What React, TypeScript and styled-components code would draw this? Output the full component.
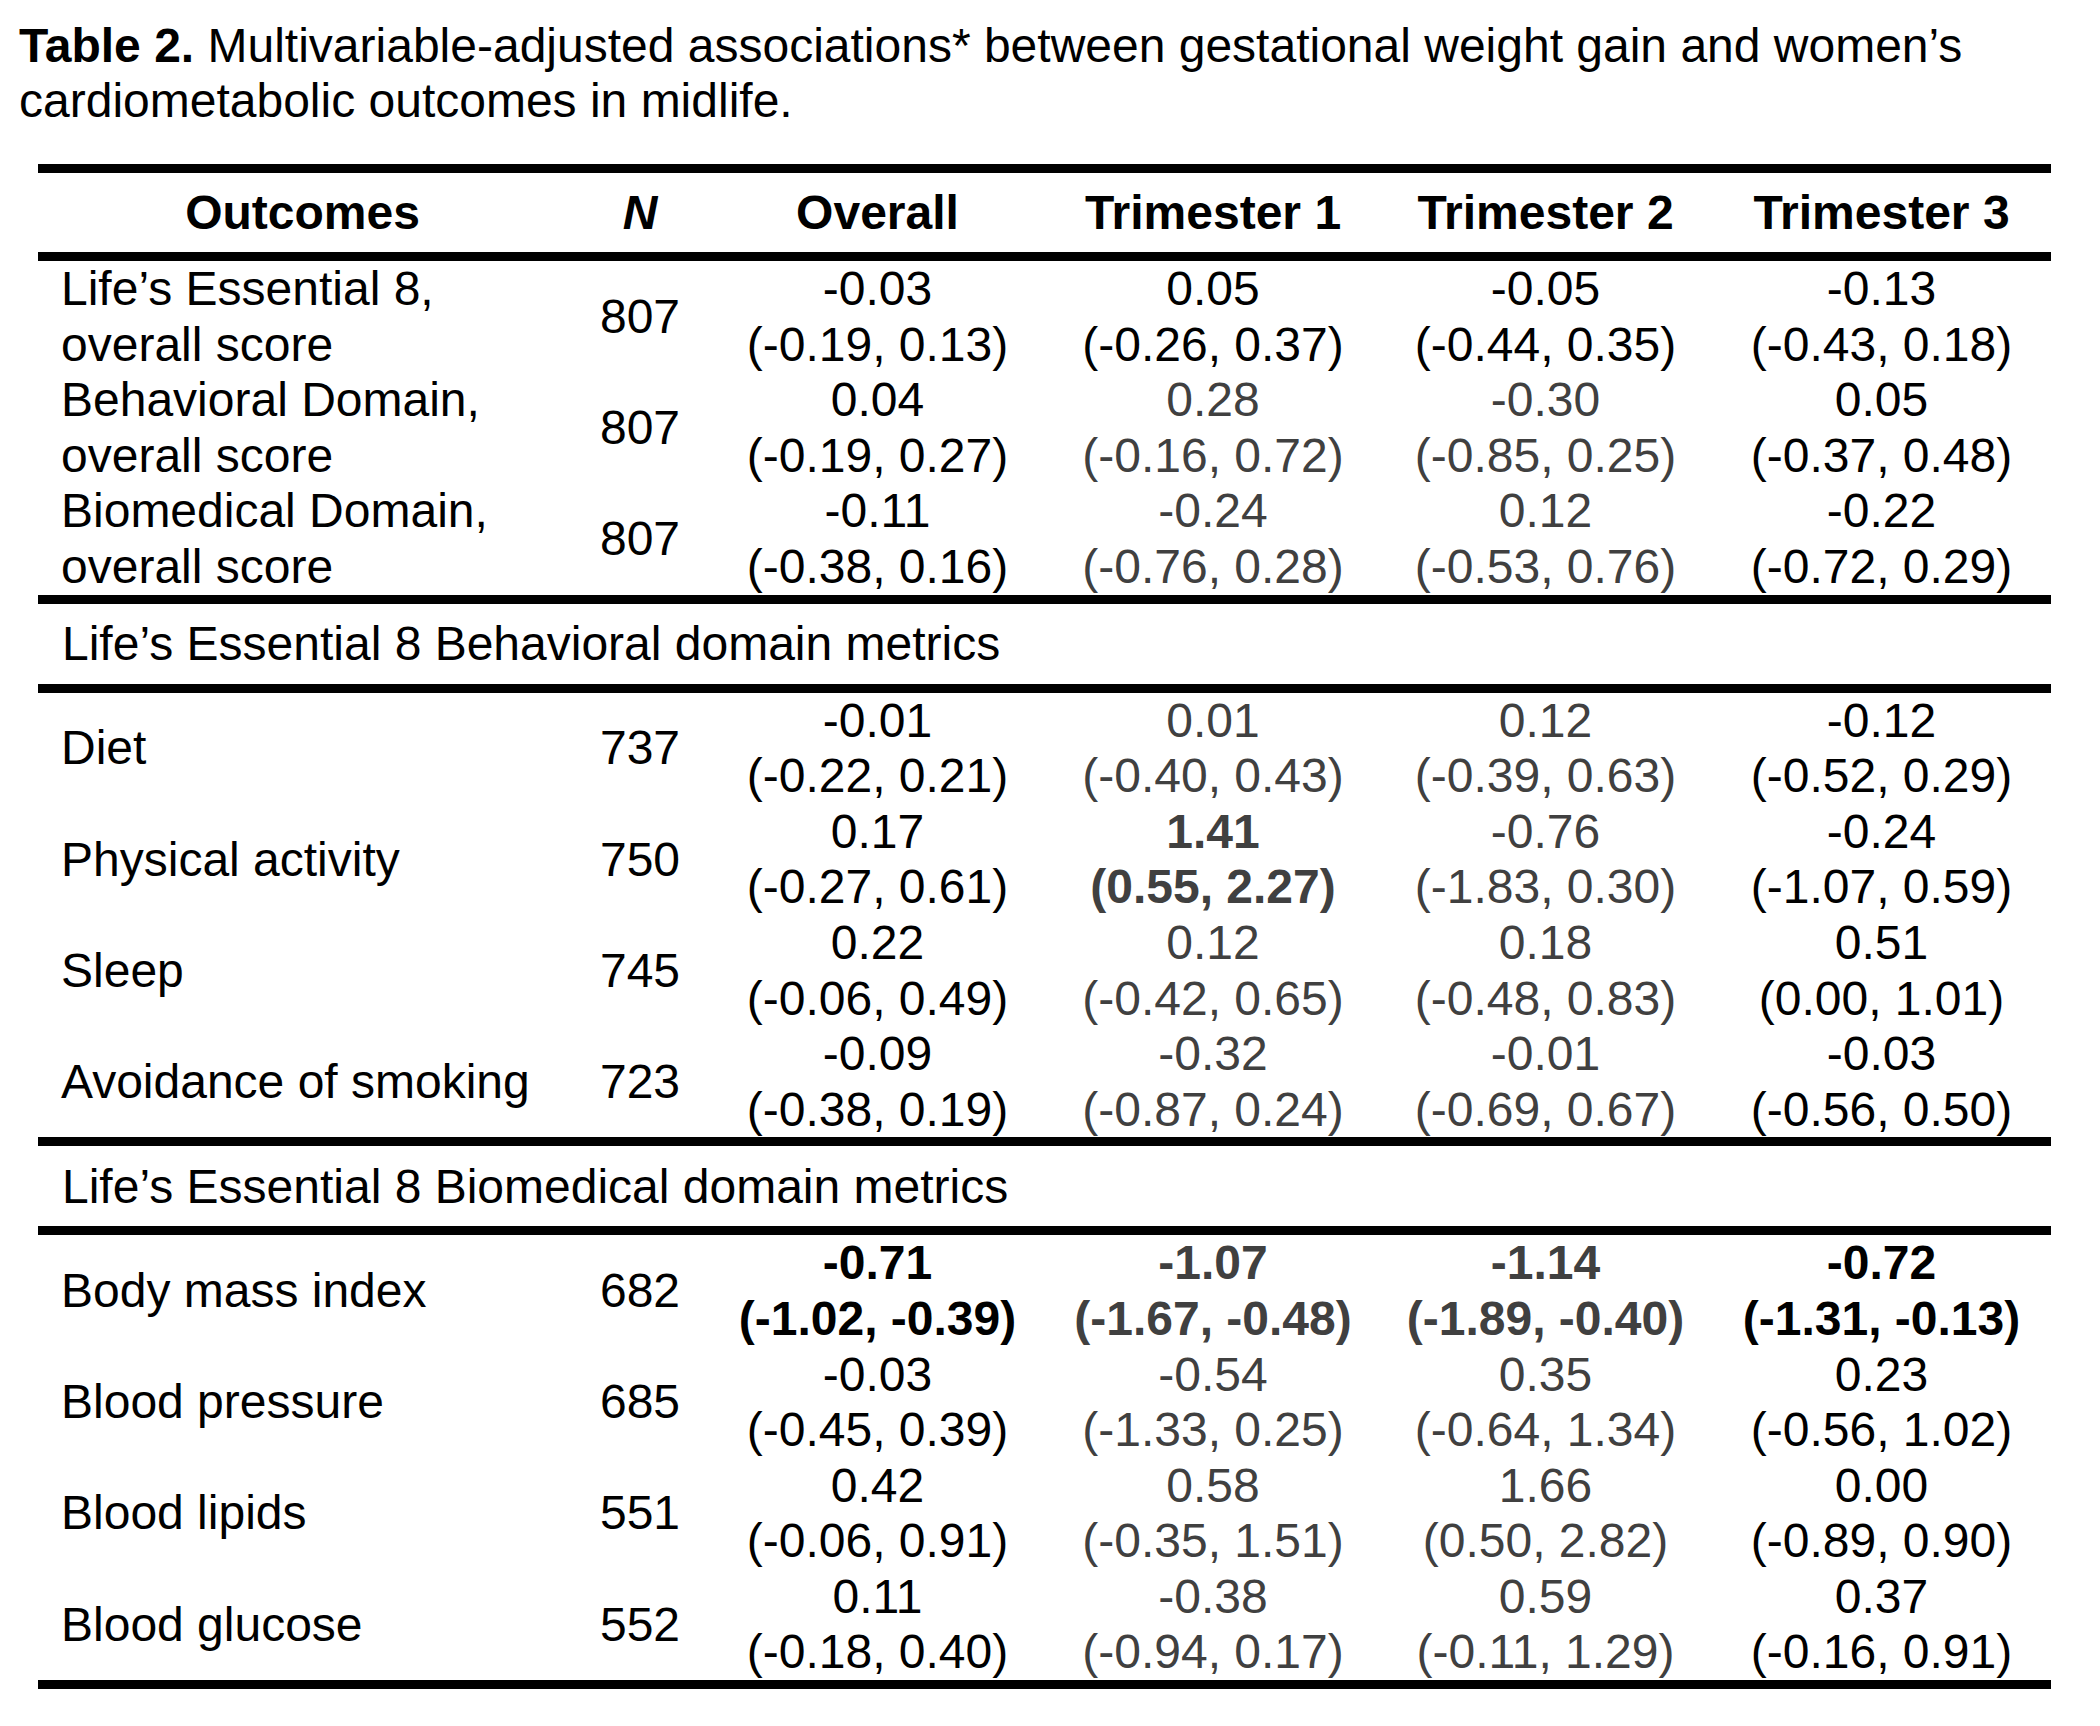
import styled, { createGlobalStyle } from 'styled-components'

type Tone = 'k' | 'g' | 'kb' | 'gb'

type Row = {
  label: string[];
  n: number;
  cells: [string, string][];
  tones: Tone[];
}

type Section = {
  title?: string;
  rows: Row[];
}

const sections: Section[] = [
  {
    rows: [
      {
        label: ['Life’s Essential 8,', 'overall score'],
        n: 807,
        cells: [['-0.03', '(-0.19, 0.13)'], ['0.05', '(-0.26, 0.37)'], ['-0.05', '(-0.44, 0.35)'], ['-0.13', '(-0.43, 0.18)']],
        tones: ['k', 'k', 'k', 'k'],
      },
      {
        label: ['Behavioral Domain,', 'overall score'],
        n: 807,
        cells: [['0.04', '(-0.19, 0.27)'], ['0.28', '(-0.16, 0.72)'], ['-0.30', '(-0.85, 0.25)'], ['0.05', '(-0.37, 0.48)']],
        tones: ['k', 'g', 'g', 'k'],
      },
      {
        label: ['Biomedical Domain,', 'overall score'],
        n: 807,
        cells: [['-0.11', '(-0.38, 0.16)'], ['-0.24', '(-0.76, 0.28)'], ['0.12', '(-0.53, 0.76)'], ['-0.22', '(-0.72, 0.29)']],
        tones: ['k', 'g', 'g', 'k'],
      },
    ],
  },
  {
    title: 'Life’s Essential 8 Behavioral domain metrics',
    rows: [
      {
        label: ['Diet'],
        n: 737,
        cells: [['-0.01', '(-0.22, 0.21)'], ['0.01', '(-0.40, 0.43)'], ['0.12', '(-0.39, 0.63)'], ['-0.12', '(-0.52, 0.29)']],
        tones: ['k', 'g', 'g', 'k'],
      },
      {
        label: ['Physical activity'],
        n: 750,
        cells: [['0.17', '(-0.27, 0.61)'], ['1.41', '(0.55, 2.27)'], ['-0.76', '(-1.83, 0.30)'], ['-0.24', '(-1.07, 0.59)']],
        tones: ['k', 'gb', 'g', 'k'],
      },
      {
        label: ['Sleep'],
        n: 745,
        cells: [['0.22', '(-0.06, 0.49)'], ['0.12', '(-0.42, 0.65)'], ['0.18', '(-0.48, 0.83)'], ['0.51', '(0.00, 1.01)']],
        tones: ['k', 'g', 'g', 'k'],
      },
      {
        label: ['Avoidance of smoking'],
        n: 723,
        cells: [['-0.09', '(-0.38, 0.19)'], ['-0.32', '(-0.87, 0.24)'], ['-0.01', '(-0.69, 0.67)'], ['-0.03', '(-0.56, 0.50)']],
        tones: ['k', 'g', 'g', 'k'],
      },
    ],
  },
  {
    title: 'Life’s Essential 8 Biomedical domain metrics',
    rows: [
      {
        label: ['Body mass index'],
        n: 682,
        cells: [['-0.71', '(-1.02, -0.39)'], ['-1.07', '(-1.67, -0.48)'], ['-1.14', '(-1.89, -0.40)'], ['-0.72', '(-1.31, -0.13)']],
        tones: ['kb', 'gb', 'gb', 'kb'],
      },
      {
        label: ['Blood pressure'],
        n: 685,
        cells: [['-0.03', '(-0.45, 0.39)'], ['-0.54', '(-1.33, 0.25)'], ['0.35', '(-0.64, 1.34)'], ['0.23', '(-0.56, 1.02)']],
        tones: ['k', 'g', 'g', 'k'],
      },
      {
        label: ['Blood lipids'],
        n: 551,
        cells: [['0.42', '(-0.06, 0.91)'], ['0.58', '(-0.35, 1.51)'], ['1.66', '(0.50, 2.82)'], ['0.00', '(-0.89, 0.90)']],
        tones: ['k', 'g', 'g', 'k'],
      },
      {
        label: ['Blood glucose'],
        n: 552,
        cells: [['0.11', '(-0.18, 0.40)'], ['-0.38', '(-0.94, 0.17)'], ['0.59', '(-0.11, 1.29)'], ['0.37', '(-0.16, 0.91)']],
        tones: ['k', 'g', 'g', 'k'],
      },
    ],
  },
]

const columns = ['Outcomes', 'N', 'Overall', 'Trimester 1', 'Trimester 2', 'Trimester 3']
const widths = [537, 138, 337, 334, 331, 336]

export default function App() {
  const lastSection = sections.length - 1
  return (
    <>
      <GlobalStyle />
      <Page>
        <Caption>
          <Strong>Table 2.</Strong> Multivariable-adjusted associations* between gestational weight gain and women’s cardiometabolic outcomes in midlife.
        </Caption>
        <Table>
          <colgroup>
            {widths.map((w, i) => <col key={i} style={{ width: w }} />)}
          </colgroup>
          <thead>
            <tr>
              {columns.map((c, i) => (
                <HeadCell key={c} $end={i === columns.length - 1}>{c === 'N' ? <i>N</i> : c}</HeadCell>
              ))}
            </tr>
          </thead>
          {sections.map((section, si) => (
            <tbody key={si}>
              {!!section.title && (
                <tr>
                  <SectionCell colSpan={6}>{section.title}</SectionCell>
                </tr>
              )}
              {section.rows.map((row, ri) => {
                const last = si === lastSection && ri === section.rows.length - 1
                return (
                  <tr key={ri}>
                    <LabelCell $last={last}>
                      {row.label.map((l, li) => <Line key={li}>{l}</Line>)}
                    </LabelCell>
                    <NumCell $last={last}>{row.n}</NumCell>
                    {row.cells.map((c, ci) => (
                      <ValueCell
                        key={ci}
                        $last={last}
                        $end={ci === row.cells.length - 1}
                        $tone={row.tones[ci]}
                      >
                        <Line>{c[0]}</Line>
                        <Line>{c[1]}</Line>
                      </ValueCell>
                    ))}
                  </tr>
                )
              })}
            </tbody>
          ))}
        </Table>
      </Page>
    </>
  )
}

const GlobalStyle = createGlobalStyle`
  html, body {
    margin: 0;
    padding: 0;
    background: #ffffff;
  }
  body {
    font-family: "Liberation Sans", Arial, Helvetica, sans-serif;
    color: #000000;
  }
`

const Page = styled.div`
  width: 2100px;
  min-height: 1726px;
  padding: 18px 0 0 19px;
  box-sizing: border-box;
`

const Caption = styled.p`
  margin: 0;
  width: 2040px;
  font-size: 48px;
  line-height: 55px;
`

const Strong = styled.span`
  font-weight: 700;
`

const Table = styled.table`
  margin: 36px 0 0 19px;
  width: 2013px;
  table-layout: fixed;
  border-collapse: separate;
  border-spacing: 0;
  font-size: 48px;
`

const HeadCell = styled.th<{ $end?: boolean }>`
  padding: 12px ${(p) => (p.$end ? '3px' : '8px')} 12px 0;
  line-height: 55px;
  font-weight: 700;
  text-align: center;
  border-top: 9px solid #000;
  border-bottom: 9px solid #000;
  white-space: nowrap;
`

const SectionCell = styled.td`
  padding: 12.5px 0 12.5px 24px;
  line-height: 55px;
  text-align: left;
  border-top: 9px solid #000;
  border-bottom: 9px solid #000;
  white-space: nowrap;
`

const BodyCell = styled.td<{ $last?: boolean }>`
  padding: 0;
  line-height: 55.6px;
  vertical-align: middle;
  white-space: nowrap;
  border-bottom: ${(p) => (p.$last ? '9px solid #000' : '0')};
`

const LabelCell = styled(BodyCell)`
  padding-left: 23px;
  text-align: left;
`

const NumCell = styled(BodyCell)`
  padding-right: 8px;
  text-align: center;
`

const ValueCell = styled(BodyCell)<{ $tone: Tone; $end?: boolean }>`
  padding-right: ${(p) => (p.$end ? '3px' : '8px')};
  text-align: center;
  color: ${(p) => (p.$tone === 'g' || p.$tone === 'gb' ? '#404040' : '#000000')};
  font-weight: ${(p) => (p.$tone === 'kb' || p.$tone === 'gb' ? 700 : 400)};
`

const Line = styled.div`
  display: block;
`
